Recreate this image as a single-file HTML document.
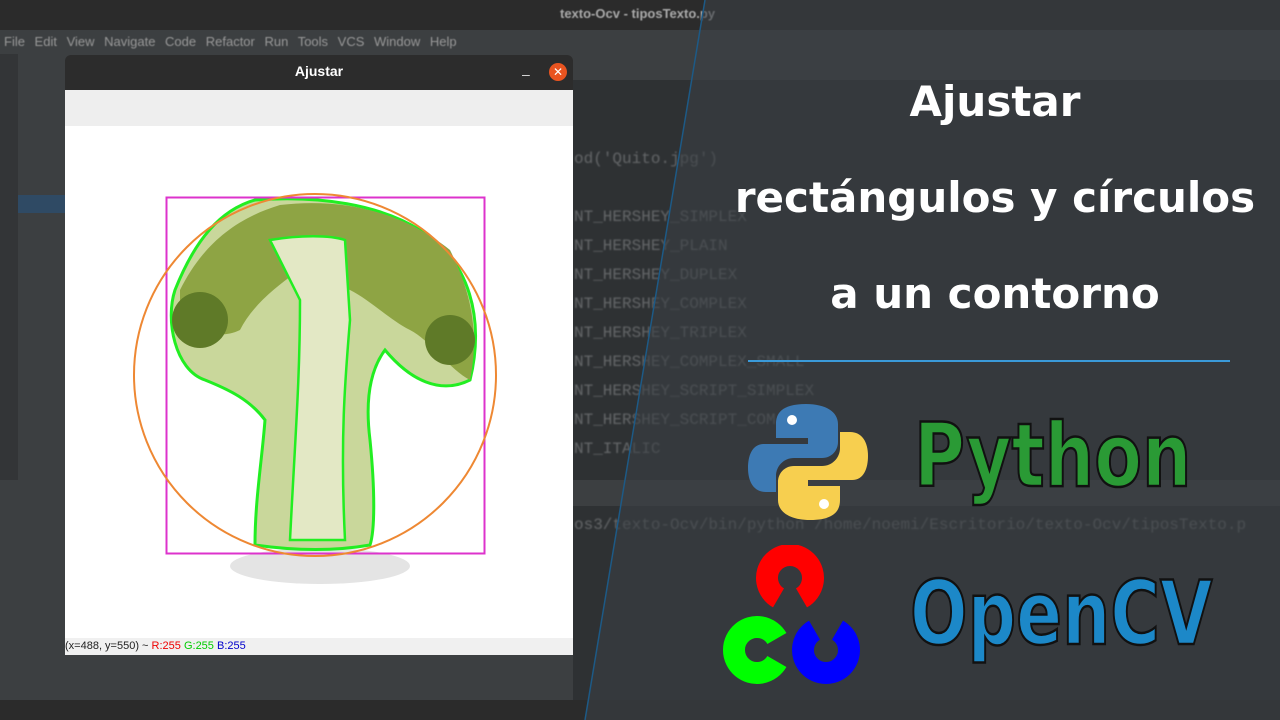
<!DOCTYPE html>
<html><head><style>
body{margin:0;width:1280px;height:720px;overflow:hidden;background:#3c3f41;font-family:"Liberation Sans",sans-serif;position:relative}
.a{position:absolute}
.code{font-family:"Liberation Mono",monospace;color:#8a8c8e;font-size:16px;opacity:.6;filter:blur(0.8px)}
.big{font-family:'DejaVu Sans',sans-serif;font-weight:bold;-webkit-text-stroke:2.5px #111;transform-origin:0 0;white-space:nowrap}
</style></head><body>
<div class="a" style="left:0;top:0;width:1280px;height:30px;background:#2b2b2b"></div>
<div class="a" style="left:560px;top:6px;color:#aaa;font-size:13px;font-weight:bold;filter:blur(.5px)">texto-Ocv - tiposTexto.py</div>
<div class="a" style="left:0;top:30px;width:1280px;height:24px;background:#3c3f41"></div>
<div class="a" style="left:4px;top:34px;color:#999;font-size:13px;word-spacing:6px;filter:blur(.5px)">File Edit View Navigate Code Refactor Run Tools VCS Window Help</div>
<div class="a" style="left:0;top:54px;width:18px;height:650px;background:#333537"></div>
<div class="a" style="left:18px;top:195px;width:50px;height:18px;background:#2f4a64"></div>
<div class="a" style="left:573px;top:80px;width:707px;height:400px;background:#2e3133"></div>
<div class="a" style="left:573px;top:480px;width:707px;height:26px;background:#3c3f41"></div>
<div class="a" style="left:573px;top:506px;width:707px;height:194px;background:#2e3133"></div>
<div class="a" style="left:0;top:480px;width:65px;height:220px;background:#3c3f41"></div>
<div class="a code" style="left:574px;top:145px;line-height:29px">od('Quito.jpg')<br><br>NT_HERSHEY_SIMPLEX<br>NT_HERSHEY_PLAIN<br>NT_HERSHEY_DUPLEX<br>NT_HERSHEY_COMPLEX<br>NT_HERSHEY_TRIPLEX<br>NT_HERSHEY_COMPLEX_SMALL<br>NT_HERSHEY_SCRIPT_SIMPLEX<br>NT_HERSHEY_SCRIPT_COM<br>NT_ITALIC</div>
<div class="a code" style="left:574px;top:516px">os3/texto-Ocv/bin/python /home/noemi/Escritorio/texto-Ocv/tiposTexto.p</div>
<div class="a" style="left:0;top:700px;width:1280px;height:20px;background:#2b2b2b"></div>
<svg class="a" style="left:0;top:0" width="1280" height="720"><polygon points="705,0 1280,0 1280,720 585,720" fill="#3a3f44" fill-opacity="0.6"/><line x1="705" y1="0" x2="585" y2="720" stroke="#1d5a86" stroke-width="1.5"/><line x1="748" y1="361" x2="1230" y2="361" stroke="#3a9ad9" stroke-width="2"/></svg>
<div class="a" style="left:700px;top:54px;width:590px;text-align:center;color:#fff;font-size:42px;line-height:96px;font-family:'DejaVu Sans',sans-serif;font-weight:bold">Ajustar<br>rectángulos y círculos<br>a un contorno</div>
<div class="a" style="left:65px;top:55px;width:508px;height:35px;background:#2c2c2c;border-radius:6px 6px 0 0"></div>
<div class="a" style="left:65px;top:63px;width:508px;text-align:center;color:#fff;font-size:14px;font-weight:bold">Ajustar</div>
<div class="a" style="left:522px;top:66px;color:#ddd;font-size:14px">–</div>
<div class="a" style="left:549px;top:63px;width:18px;height:18px;border-radius:50%;background:#e95420;color:#fff;font-size:12px;text-align:center;line-height:18px">✕</div>
<div class="a" style="left:65px;top:90px;width:508px;height:36px;background:#eeeeee"></div>
<div class="a" style="left:65px;top:126px;width:508px;height:512px;background:#fff"></div>
<div class="a" style="left:65px;top:638px;width:508px;height:17px;background:#f0f0f0;font-size:11px;line-height:17px;color:#222">(x=488, y=550) ~ <span style="color:#e00">R:255</span> <span style="color:#0c0">G:255</span> <span style="color:#00c">B:255</span></div>
<svg class="a" style="left:65px;top:126px" width="508" height="512">
<ellipse cx="255" cy="440" rx="90" ry="18" fill="#e4e4e4"/>
<g transform="translate(-65,-126)">
<path d="M255,200 C320,195 380,205 420,230 C470,260 485,320 470,380 C440,395 410,380 385,350 C370,370 365,400 370,440 C375,490 375,530 370,545 C330,552 290,550 255,545 C255,500 262,460 265,420 C250,400 230,390 205,380 C175,370 165,320 175,290 C195,240 220,210 255,200Z" fill="#c9d79b" stroke="#22ee22" stroke-width="3"/>
<path d="M180,290 C200,250 230,220 280,205 C340,198 400,210 450,250 C470,290 480,330 470,380 C450,370 430,340 410,330 C390,320 370,300 350,290 L300,270 C270,290 250,310 240,330 C220,340 200,330 180,330Z" fill="#8ea444"/>
<path d="M270,240 C300,235 330,235 345,240 L350,320 C345,380 340,440 345,540 L290,540 C295,440 300,380 300,300Z" fill="#e3e8c5" stroke="#22ee22" stroke-width="2.5"/>
<circle cx="200" cy="320" r="28" fill="#5f7a28"/><circle cx="450" cy="340" r="25" fill="#5f7a28"/>
<rect x="166.5" y="197.5" width="318" height="356" fill="none" stroke="#dd33cc" stroke-width="2"/>
<circle cx="315" cy="375" r="181" fill="none" stroke="#ee8833" stroke-width="2"/>
</g></svg>
<svg class="a" style="left:746px;top:400px" width="124" height="124" viewBox="0 0 124 124">
<path d="M60,4 C35,4 30,14 30,24 L30,38 L62,38 L62,44 L18,44 C6,44 2,56 2,68 C2,82 8,92 20,92 L30,92 L30,76 C30,66 38,58 48,58 L76,58 C86,58 92,50 92,42 L92,24 C92,12 80,4 60,4Z" fill="#3d7ab4"/>
<path d="M64,120 C89,120 94,110 94,100 L94,86 L62,86 L62,80 L106,80 C118,80 122,68 122,56 C122,42 116,32 104,32 L94,32 L94,48 C94,58 86,66 76,66 L48,66 C38,66 32,74 32,82 L32,100 C32,112 44,120 64,120Z" fill="#f7cf4f"/>
<circle cx="46" cy="20" r="5" fill="#fff"/><circle cx="78" cy="104" r="5" fill="#fff"/>
</svg>
<div class="a big" style="left:914px;top:404px;font-size:88px;color:#2a9a35;transform:scaleX(0.79)">Python</div>
<svg class="a" style="left:715px;top:545px" width="160" height="150">
<g fill="none" stroke-width="22">
<path d="M63.5,52.9 A23,23 0 1 1 86.5,52.9" stroke="#f00"/>
<path d="M61.9,93.5 A23,23 0 1 0 61.9,116.5" stroke="#0f0"/>
<path d="M99.5,85.1 A23,23 0 1 0 122.5,85.1" stroke="#00f"/>
</g></svg>
<div class="a big" style="left:910px;top:562px;font-size:88px;color:#1c88c8;transform:scaleX(0.77)">OpenCV</div>
</body></html>
